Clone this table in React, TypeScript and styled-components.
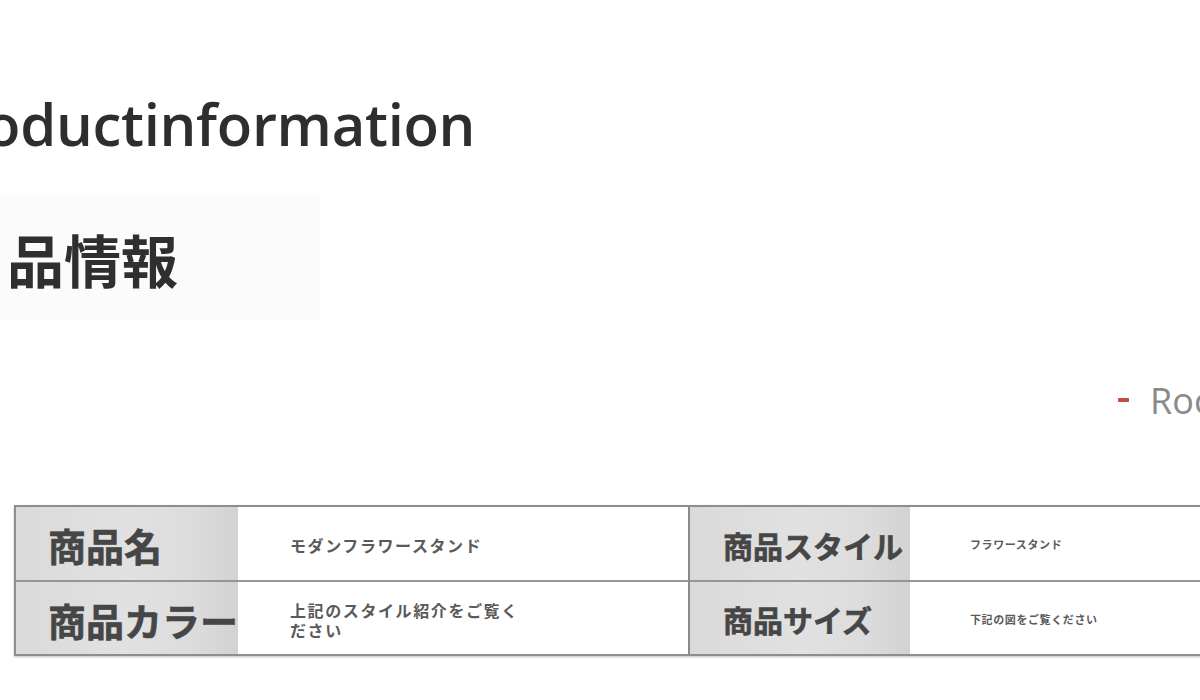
import React from "react";
import styled, { createGlobalStyle } from "styled-components";

const GlobalStyle = createGlobalStyle`
  html, body {
    margin: 0;
    padding: 0;
    background: #ffffff;
    overflow: hidden;
  }
  body {
    width: 1200px;
    height: 700px;
    font-family: "Noto Sans CJK JP", "Noto Sans", sans-serif;
  }
`;

const specs = [
  [
    { label: "商品名", value: ["モダンフラワースタンド"] },
    { label: "商品スタイル", value: ["フラワースタンド"] },
  ],
  [
    { label: "商品カラー", value: ["上記のスタイル紹介をご覧く", "ださい"] },
    { label: "商品サイズ", value: ["下記の図をご覧ください"] },
  ],
];

function App() {
  return (
    <Page>
      <GlobalStyle />
      <EnTitle>Productinformation</EnTitle>
      <JpTitleBox>
        <JpTitle>
          <Cut>商</Cut>品情報
        </JpTitle>
      </JpTitleBox>
      <SubRow>
        <Dash />
        <SubText>Room</SubText>
      </SubRow>
      <SpecTable>
        {specs.map((row, r) =>
          row.map((cell, c) => (
            <React.Fragment key={`${r}-${c}`}>
              <LabelCell $top={r > 0} $divider={c > 0}>
                <Label $small={c > 0}>{cell.label}</Label>
              </LabelCell>
              <ValueCell $top={r > 0} $small={c > 0}>
                <Value $small={c > 0}>
                  {cell.value.map((line) => (
                    <span key={line}>{line}</span>
                  ))}
                </Value>
              </ValueCell>
            </React.Fragment>
          ))
        )}
      </SpecTable>
    </Page>
  );
}

export default App;

const Page = styled.div`
  width: 1200px;
  height: 700px;
  overflow: hidden;
  display: flex;
  flex-direction: column;
`;

const EnTitle = styled.h1`
  margin: 84px 0 0 -75px;
  font-family: "Open Sans", "Noto Sans", sans-serif;
  font-weight: 600;
  font-size: 58px;
  line-height: 80px;
  color: #2e2e2e;
  white-space: nowrap;
  letter-spacing: -0.3px;
`;

const JpTitleBox = styled.div`
  margin-top: 29px;
  width: 320px;
  height: 127px;
  background: #fbfbfb;
  display: flex;
  align-items: center;
  overflow: visible;
`;

const JpTitle = styled.h2`
  margin: 2px 0 0 -58px;
  font-family: "Noto Sans CJK JP", sans-serif;
  font-weight: 700;
  font-size: 57px;
  line-height: 60px;
  color: #2f2f2f;
  white-space: nowrap;
`;

/* first character sits just past the left edge of the crop */
const Cut = styled.span`
  margin-right: 8px;
`;

const SubRow = styled.div`
  margin-top: 58px;
  margin-right: -60px;
  height: 44px;
  display: flex;
  align-items: center;
  justify-content: flex-end;
  gap: 21px;
`;

const Dash = styled.span`
  width: 11px;
  height: 4px;
  background: #c8483c;
  border-radius: 1px;
`;

const SubText = styled.span`
  font-family: "Open Sans", "Noto Sans", sans-serif;
  font-size: 36px;
  color: #8a8a8a;
  width: 110px;
  white-space: nowrap;
`;

const SpecTable = styled.div`
  margin: 83px 0 0 14px;
  width: 1348px;
  flex-shrink: 0;
  display: grid;
  grid-template-columns: 222px 450px 222px 450px;
  grid-template-rows: 73px 74px;
  border: 2px solid #8e8e8e;
  box-shadow: 0 1px 2px rgba(0, 0, 0, 0.25);
`;

const LabelCell = styled.div<{ $top: boolean; $divider: boolean }>`
  display: flex;
  align-items: center;
  padding-left: ${(p) => (p.$divider ? 33 : 32)}px;
  background: linear-gradient(90deg, #dadada 0%, #e1e1e1 50%, #dcdcdc 80%, #d2d2d2 100%);
  border-top: ${(p) => (p.$top ? "2px solid #969696" : "none")};
  border-left: ${(p) => (p.$divider ? "2px solid #8a8a8a" : "none")};
  overflow: visible;
`;

const Label = styled.span<{ $small: boolean }>`
  font-family: "Noto Sans CJK JP", sans-serif;
  font-weight: 700;
  font-size: ${(p) => (p.$small ? 30 : 38)}px;
  color: #464646;
  white-space: nowrap;
  margin-top: 2px;
  -webkit-text-stroke: 0.6px #464646;
`;

const ValueCell = styled.div<{ $top: boolean; $small: boolean }>`
  display: flex;
  align-items: center;
  padding-left: ${(p) => (p.$small ? 60 : 52)}px;
  background: #ffffff;
  border-top: ${(p) => (p.$top ? "2px solid #969696" : "none")};
`;

const Value = styled.div<{ $small: boolean }>`
  display: flex;
  flex-direction: column;
  font-family: "Noto Sans CJK JP", sans-serif;
  font-weight: 700;
  font-size: ${(p) => (p.$small ? 11 : 16)}px;
  letter-spacing: ${(p) => (p.$small ? 0.6 : 1.6)}px;
  line-height: ${(p) => (p.$small ? 15 : 20)}px;
  color: #5a5a5a;
  white-space: nowrap;
  margin-top: ${(p) => (p.$small ? 2 : 3)}px;
`;
